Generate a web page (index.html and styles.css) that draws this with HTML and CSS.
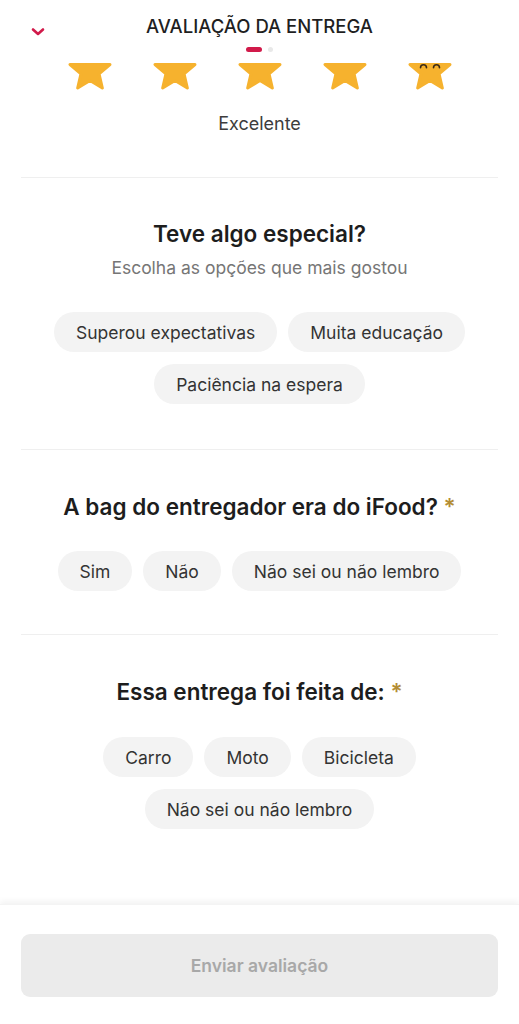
FILE: index.html
```html
<!DOCTYPE html>
<html lang="pt-BR">
<head>
  <meta charset="UTF-8">
  <meta name="viewport" content="width=device-width, initial-scale=1.0">
  <title>Avaliação da entrega</title>
  <link rel="stylesheet" href="styles.css">
</head>
<body>
  <div class="page">
    <main class="content">
      <!-- header -->
      <header class="top-bar">
        <button class="close-button" aria-label="Fechar">
          <svg width="16" height="10" viewBox="0 0 16 10">
            <path d="M3 2.5 L8 7 L13 2.5" fill="none" stroke="#d11a4a" stroke-width="2.6" stroke-linecap="round" stroke-linejoin="round"/>
          </svg>
        </button>
        <h1 class="page-title">AVALIAÇÃO DA ENTREGA</h1>
        <span></span>
      </header>

      <div class="pager">
        <span class="pager-dot active"></span>
        <span class="pager-dot"></span>
      </div>

      <!-- stars -->
      <div class="stars">
        <svg class="star" width="48" height="48" viewBox="-24 -24 48 48"><use href="#star-shape"/></svg>
        <svg class="star" width="48" height="48" viewBox="-24 -24 48 48"><use href="#star-shape"/></svg>
        <svg class="star" width="48" height="48" viewBox="-24 -24 48 48"><use href="#star-shape"/></svg>
        <svg class="star" width="48" height="48" viewBox="-24 -24 48 48"><use href="#star-shape"/></svg>
        <svg class="star" width="48" height="48" viewBox="-24 -24 48 48">
          <use href="#star-shape"/>
          <path d="M-9.5 -3.2 a3 3 0 0 1 6 0 M3.5 -3.2 a3 3 0 0 1 6 0" fill="none" stroke="#3b2a16" stroke-width="1.6" stroke-linecap="round"/>
        </svg>
      </div>
      <p class="rating-label">Excelente</p>

      <!-- section: especial -->
      <section class="question first">
        <h2 class="question-title">Teve algo especial?</h2>
        <p class="question-hint">Escolha as opções que mais gostou</p>
        <div class="chips">
          <button class="chip">Superou expectativas</button>
          <button class="chip">Muita educação</button>
          <button class="chip">Paciência na espera</button>
        </div>
      </section>

      <!-- section: bag -->
      <section class="question">
        <h2 class="question-title">A bag do entregador era do iFood? <span class="required">*</span></h2>
        <div class="chips">
          <button class="chip">Sim</button>
          <button class="chip">Não</button>
          <button class="chip">Não sei ou não lembro</button>
        </div>
      </section>

      <!-- section: veiculo -->
      <section class="question last">
        <h2 class="question-title">Essa entrega foi feita de: <span class="required">*</span></h2>
        <div class="chips narrow">
          <button class="chip">Carro</button>
          <button class="chip">Moto</button>
          <button class="chip">Bicicleta</button>
          <button class="chip">Não sei ou não lembro</button>
        </div>
      </section>
    </main>

    <footer class="bottom-bar">
      <button class="submit-button" disabled>Enviar avaliação</button>
    </footer>
  </div>

  <svg width="0" height="0" class="defs">
    <defs>
      <polygon id="star-shape" points="0,-21 5.58,-7.69 19.97,-6.49 9.04,2.94 12.34,16.99 0,9.5 -12.34,16.99 -9.04,2.94 -19.97,-6.49 -5.58,-7.69" fill="#f6b22e" stroke="#f6b22e" stroke-width="3" stroke-linejoin="round"/>
    </defs>
  </svg>
</body>
</html>
```

FILE: styles.css
```css
/* Global Styles */
* {
  box-sizing: border-box;
  font-family: Inter, "Noto Sans", sans-serif;
}

html, body {
  margin: 0;
  padding: 0;
  background-color: #ffffff;
  color: #222;
}

button {
  border: none;
  background: none;
  padding: 0;
  cursor: pointer;
}

.page {
  display: flex;
  flex-direction: column;
  min-height: 100vh;
}

.content {
  flex: 1;
  padding: 12px 21px 0;
}

/* header */
.top-bar {
  display: grid;
  grid-template-columns: 44px 1fr 44px;
}

.close-button {
  width: 44px;
  height: 28px;
  padding: 12px 0 0 9px;
  text-align: left;
}

.page-title {
  margin: 0;
  padding-top: 2px;
  text-align: center;
  font-size: 18.5px;
  line-height: 24px;
  font-weight: 500;
  color: #1f1f1f;
}

.pager {
  display: flex;
  justify-content: center;
  align-items: center;
  gap: 6px;
  margin-top: 7px;
  height: 5px;
}

.pager-dot {
  width: 5px;
  height: 5px;
  border-radius: 3px;
  background-color: #e8e8e8;
}

.pager-dot.active {
  width: 16px;
  background-color: #d11a4a;
}

/* stars, only the lower part shows under the header */
.stars {
  display: flex;
  justify-content: center;
  gap: 37px;
  height: 27px;
  margin-top: 11px;
  overflow: hidden;
}

.star {
  flex: none;
  margin-top: -16px;
}

.rating-label {
  margin: 23px 0 0;
  text-align: center;
  font-size: 18px;
  line-height: 22px;
  color: #3d3d3d;
  padding-bottom: 42px;
  border-bottom: 1px solid #efefef;
}

/* questions */
.question {
  padding: 43px 0 43px;
  border-bottom: 1px solid #efefef;
  text-align: center;
}

.question.first {
  padding: 42px 0 45px;
}

.question.last {
  border-bottom: none;
}

.question-title {
  margin: 0;
  font-size: 22.5px;
  line-height: 28px;
  font-weight: 600;
  color: #1d1d1d;
}

.required {
  color: #b38d34;
  font-weight: 600;
}

.question-hint {
  margin: 9px 0 0;
  font-size: 17.5px;
  line-height: 22px;
  color: #767676;
}

.chips {
  display: flex;
  flex-wrap: wrap;
  justify-content: center;
  gap: 12px 11px;
  margin-top: 30px;
  padding: 0 30px;
}

.question.first .chips {
  margin-top: 33px;
}

.chips.narrow {
  margin-top: 31px;
  padding: 0 80px;
}

.chip {
  height: 40px;
  padding: 0 22px;
  border-radius: 20px;
  background-color: #f3f3f3;
  color: #333;
  font-size: 17.5px;
}

/* footer */
.bottom-bar {
  padding: 29px 21px 27px;
  box-shadow: 0 -3px 6px rgba(0, 0, 0, 0.05);
  border-top: 1px solid #f4f4f4;
}

.submit-button {
  display: block;
  width: 100%;
  height: 63px;
  border-radius: 9px;
  background-color: #ebebeb;
  color: #a8a8a8;
  font-size: 17.5px;
  font-weight: 600;
  cursor: default;
}

.defs {
  position: absolute;
}
```
